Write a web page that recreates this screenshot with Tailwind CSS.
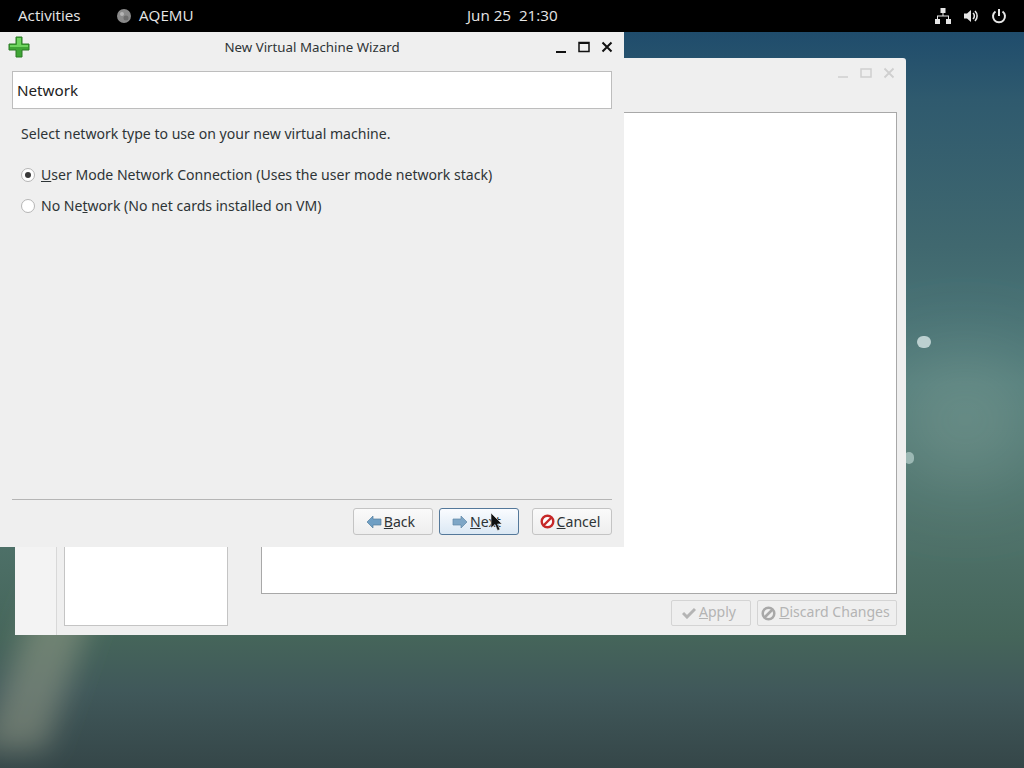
<!DOCTYPE html>
<html lang="en">
<head>
<meta charset="utf-8"/>
<title>New Virtual Machine Wizard</title>
<script src="https://cdn.jsdelivr.net/npm/@tailwindcss/browser@4"></script>
</head>
<body class="bg-[#2f5058]">
<div class="w-[1024px] h-[768px] overflow-hidden relative font-['Noto_Sans',sans-serif] text-[#2e3436]">
<!-- Wallpaper -->
<div class="absolute inset-0 bg-[linear-gradient(180deg,#1f4c6c_4%,#2f5a6e_13%,#40686f_32%,#527c7a_50%,#4e7169_70%,#45655a_83%,#40585a_90%,#354648_100%)]"></div>
<svg class="absolute inset-0 w-[1024px] h-[768px]" viewBox="0 0 1024 768">
  <defs>
    <filter id="blurGlow" x="-150%" y="-150%" width="400%" height="400%"><feGaussianBlur stdDeviation="45"/></filter>
    <filter id="blurStreak" x="-100%" y="-50%" width="300%" height="200%"><feGaussianBlur stdDeviation="14"/></filter>
  </defs>
  <ellipse cx="965" cy="420" rx="70" ry="55" fill="#8aa89f" fill-opacity=".55" filter="url(#blurGlow)"/>
  <path d="M40 590h60L45 750H-20z" fill="#9a9f8c" fill-opacity=".5" filter="url(#blurStreak)"/>
</svg>
<div class="absolute left-[917px] top-[336px] w-[14px] h-[12px] rounded-full bg-[#bcd0d0]"></div>
<div class="absolute left-[904px] top-[452px] w-[10px] h-[12px] rounded-full bg-[#9cb8b4]"></div>

<!-- Top bar -->
<header class="absolute left-0 top-0 w-full h-[32px] bg-black text-[#e6e6e6] flex items-center font-['Open_Sans',sans-serif] text-[15.200px] font-medium">
  <span class="ml-[18px] w-[99px] -mt-[2px]">Activities</span>
  <svg class="w-[16px] h-[16px] mr-[7px] -ml-[1px] -mt-[1px]" viewBox="0 0 16 16"><circle cx="8" cy="8" r="7" fill="#8a8a8a"/><circle cx="6" cy="6" r="2" fill="#b5b5b5"/><circle cx="10" cy="10" r="2.500" fill="#6d6d6d"/></svg>
  <span class="w-[328px] -mt-[2px]">AQEMU</span>
  <span class="whitespace-pre -mt-[2px]">Jun 25  21:30</span>
  <div class="ml-auto mr-[17px] flex items-center gap-[12px]">
    <svg class="w-[16px] h-[16px]" viewBox="0 0 16 16" fill="#e6e6e6"><rect x="5.500" y="0" width="5" height="5"/><rect x="0" y="11" width="5" height="5"/><rect x="11" y="11" width="5" height="5"/><path d="M7.500 5h1v2.500h5.500V11h-1V8.500H3V11H2V7.500h5.500z"/></svg>
    <svg class="w-[16px] h-[16px]" viewBox="0 0 16 16" fill="#e6e6e6"><path d="M1 5.500h3L8 2v12L4 10.500H1z"/><path d="M10 5a4 4 0 0 1 0 6M12 3a7 7 0 0 1 0 10" fill="none" stroke="#e6e6e6" stroke-width="1.600"/></svg>
    <svg class="w-[16px] h-[16px]" viewBox="0 0 16 16" fill="none" stroke="#e6e6e6" stroke-width="2"><path d="M4.500 3.500a6 6 0 1 0 7 0"/><path d="M8 1v7"/></svg>
  </div>
</header>

<!-- AQEMU main window, behind the wizard -->
<section class="absolute left-[15px] top-[58px] w-[891px] h-[577px] bg-[#efefef] rounded-t-[3px] flex flex-col">
  <div class="h-[30px] flex justify-end items-center pr-[11px] gap-[11px] shrink-0">
    <svg class="w-[12px] h-[12px]" viewBox="0 0 12 12" stroke="#cfcfcf" stroke-width="1.500"><path d="M1 10h10"/></svg>
    <svg class="w-[12px] h-[12px]" viewBox="0 0 12 12" fill="none" stroke="#cfcfcf" stroke-width="1.500"><rect x="1" y="2" width="10" height="8"/></svg>
    <svg class="w-[12px] h-[12px]" viewBox="0 0 12 12" stroke="#cfcfcf" stroke-width="1.800"><path d="M1.500 1.500l9 9M10.500 1.500l-9 9"/></svg>
  </div>
  <div class="flex-1 flex min-h-0 pt-[24px] pr-[9px] pb-[9px]">
    <div class="w-[42px] border-r border-[#d8d8d8] bg-[#f3f3f3] -mt-[24px] -mb-[9px] mr-[7px]"></div>
    <div class="w-[164px] mr-[33px] self-end h-[300px] bg-white border border-[#c4c4c4]"></div>
    <div class="flex-1 flex flex-col min-w-0">
      <div class="flex-1 bg-white border border-[#a8a8a8]"></div>
      <div class="h-[32px] flex justify-end items-end gap-[6px] text-[14.070px] text-[#b4b4b4]">
        <div class="h-[26px] w-[80px] border border-[#d4d4d4] rounded-[2px] flex items-center justify-center gap-[3px] pr-[4px]">
          <svg class="w-[14px] h-[12px]" viewBox="0 0 14 12" fill="none" stroke="#b4b4b4" stroke-width="3"><path d="M1 6l4 4 8-8"/></svg><span class="-mt-[2px]"><u>A</u>pply</span>
        </div>
        <div class="h-[26px] w-[140px] border border-[#d4d4d4] rounded-[2px] flex items-center justify-center gap-[3px] pr-[3px]">
          <svg class="w-[15px] h-[15px]" viewBox="0 0 15 15" fill="none" stroke="#a8a8a8" stroke-width="2.500"><circle cx="7.500" cy="7.500" r="5.800"/><path d="M3.500 11.500l8-8"/></svg><span class="-mt-[2px]"><u>D</u>iscard Changes</span>
        </div>
      </div>
    </div>
  </div>
</section>

<!-- Wizard -->
<section class="absolute left-0 top-[32px] w-[624px] h-[515px] bg-[#efefef] flex flex-col px-[12px]">
  <div class="h-[39px] -mx-[12px] relative flex items-center justify-center shrink-0 text-[13.300px] text-[#2e3436] pb-[8px]">
    <svg class="absolute left-[8px] top-[4px] w-[22px] h-[22px]" viewBox="0 0 22 22"><path d="M8 1h6v7h7v6h-7v7H8v-7H1V8h7z" fill="#3fa535" stroke="#2a7a25" stroke-linejoin="round"/><path d="M9 2h4v7h7v2H2V9h7z" fill="#6fd45f"/></svg>
    <span>New Virtual Machine Wizard</span>
    <div class="absolute right-[11px] top-[9px] flex items-center gap-[11px]">
      <svg class="w-[12px] h-[12px]" viewBox="0 0 12 12" stroke="#111" stroke-width="2"><path d="M1 11h10"/></svg>
      <svg class="w-[12px] h-[12px]" viewBox="0 0 12 12" fill="none" stroke="#111" stroke-width="1.500"><path d="M1 1.500h10V10.500H1z"/><path d="M1 2h10" stroke-width="2"/></svg>
      <svg class="w-[12px] h-[12px]" viewBox="0 0 12 12" stroke="#111" stroke-width="2"><path d="M1.500 1.500l9 9M10.500 1.500l-9 9"/></svg>
    </div>
  </div>
  <div class="h-[38px] bg-white border border-[#bdbdbd] flex items-center pl-[4px] text-[15.200px] text-[#222] shrink-0">Network</div>
  <p class="mt-[15px] ml-[9px] text-[14.070px] leading-[20px]">Select network type to use on your new virtual machine.</p>
  <div class="mt-[21px] ml-[9px] flex items-center h-[20px] text-[14.070px]">
    <span class="w-[14px] h-[14px] rounded-full bg-white border border-[#b5b5b5] flex items-center justify-center mr-[6px]"><span class="w-[6px] h-[6px] rounded-full bg-[#3a3a3a]"></span></span>
    <span><u>U</u>ser Mode Network Connection (Uses the user mode network stack)</span>
  </div>
  <div class="mt-[11px] ml-[9px] flex items-center h-[20px] text-[14.070px]">
    <span class="w-[14px] h-[14px] rounded-full bg-white border border-[#b5b5b5] mr-[6px]"></span>
    <span>No Ne<u>t</u>work (No net cards installed on VM)</span>
  </div>
  <div class="flex-1"></div>
  <div class="border-t border-[#b5b5b5] h-[48px] shrink-0 flex justify-end items-start pt-[8px] text-[14.070px] gap-[6px]">
    <div class="h-[27px] w-[80px] rounded-[3px] border border-[#c4c4c4] bg-gradient-to-b from-[#fafafa] to-[#eeeeee] flex items-center justify-center gap-[2px] pr-[5px]">
      <svg class="w-[16px] h-[14px]" viewBox="0 0 16 14"><path d="M1 7l6-6v3h8v6H7v3z" fill="#6f9fc4" stroke="#557f9f" stroke-width=".7"/></svg><span><u>B</u>ack</span>
    </div>
    <div class="h-[27px] w-[80px] rounded-[3px] border border-[#54789a] bg-gradient-to-b from-[#fafcff] to-[#dbe8f4] flex items-center justify-center gap-[2px] pr-[5px] relative">
      <svg class="w-[16px] h-[14px]" viewBox="0 0 16 14"><path d="M15 7L9 1v3H1v6h8v3z" fill="#7ea6c6" stroke="#5f87a6" stroke-width=".7"/></svg><span><u>N</u>ext</span>
      <svg class="absolute left-[50px] top-[3px] w-[13px] h-[21px]" viewBox="0 0 13 21"><path d="M1 1v15l4-3.500 2.500 6 2.500-1-2.500-5.500H12z" fill="#111" stroke="#eee" stroke-width=".6"/></svg>
    </div>
    <div class="h-[27px] w-[80px] ml-[7px] rounded-[3px] border border-[#c4c4c4] bg-gradient-to-b from-[#fafafa] to-[#eeeeee] flex items-center justify-center gap-[2px] pr-[4px]">
      <svg class="w-[15px] h-[15px]" viewBox="0 0 15 15" fill="#fff" stroke="#c62828" stroke-width="2.400"><circle cx="7.500" cy="7.500" r="5.800"/><path d="M3.500 11.500l8-8"/></svg><span><u>C</u>ancel</span>
    </div>
  </div>
</section>
</div>
</body>
</html>
